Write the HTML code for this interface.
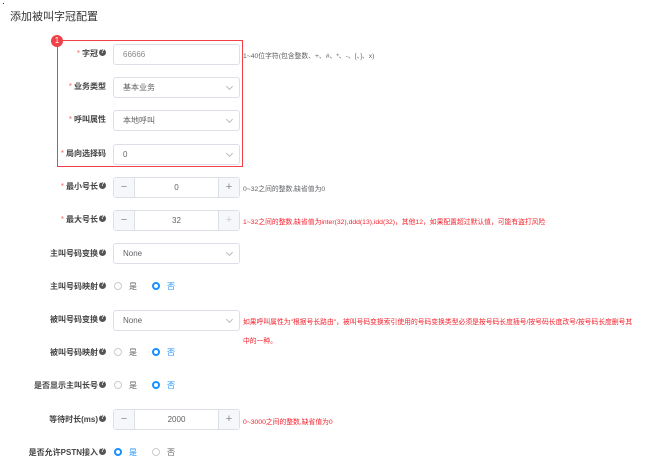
<!DOCTYPE html><html><head><meta charset="utf-8"><style>
body{margin:0;width:651px;height:470px;background:#fff;font-family:"Liberation Sans","Noto Sans CJK SC",sans-serif;position:relative;overflow:hidden;color:#333}
.a{position:absolute}
.t{left:10px;top:8px;font-size:11px;color:#333}
.lab{position:absolute;right:545px;font-size:8px;font-weight:bold;color:#444;white-space:nowrap;line-height:10px}
.lab b{color:#f56c6c;font-weight:normal;margin-right:2px}
.q{display:inline-block;width:7px;height:7px;border-radius:50%;background:#555;color:#fff;font-size:6px;line-height:7px;text-align:center;margin-left:1px;vertical-align:middle;position:relative;top:-1px}
.in{position:absolute;left:113px;width:125px;height:19px;border:1px solid #dcdfe6;border-radius:3px;font-size:8px;line-height:19px;color:#606266;box-sizing:content-box}
.in span{margin-left:9px}
.arr{position:absolute;right:7px;top:6px;width:4px;height:4px;border-right:1px solid #bbb;border-bottom:1px solid #bbb;transform:rotate(45deg)}
.num .m,.num .p{position:absolute;top:0;width:20px;height:19px;background:#f5f7fa;color:#888;text-align:center;font-size:11px}
.num .m{left:0;border-right:1px solid #dcdfe6}.num .p{right:0;border-left:1px solid #dcdfe6}
.num .v{position:absolute;left:21px;right:21px;text-align:center}
.h{position:absolute;left:243px;font-size:6.8px;white-space:nowrap;color:#606266}
.r{color:#f5222d}
.rad{position:absolute;font-size:8px;color:#606266}
.c{display:inline-block;width:8px;height:8px;border:1px solid #ccc;border-radius:50%;vertical-align:-1px;margin-right:7px;box-sizing:border-box}
.c.on{border:2.5px solid #1890ff;background:#fff}
.on+i{color:#1890ff;font-style:normal}
i{font-style:normal}
</style></head><body>
<div class="a" style="left:3px;top:3px;width:1px;height:1px;background:#333"></div>
<div class="a t">添加被叫字冠配置</div>
<div class="a" style="left:57px;top:40px;width:184px;height:125px;border:1.5px solid #f04048"></div>
<div class="a" style="left:51px;top:35px;width:12px;height:12px;border-radius:50%;background:#f04048;color:#fff;font-size:8px;text-align:center;line-height:12px">1</div>

<div class="lab" style="top:49px"><b>*</b>字冠<span class="q">?</span></div>
<div class="in" style="top:44px"><span style="color:#888">66666</span></div>
<div class="h" style="top:50px">1~40位字符(包含整数、+、#、*、-、[、]、x)</div>

<div class="lab" style="top:82px"><b>*</b>业务类型</div>
<div class="in" style="top:77px"><span>基本业务</span><div class="arr"></div></div>
<div class="lab" style="top:115px"><b>*</b>呼叫属性</div>
<div class="in" style="top:110px"><span>本地呼叫</span><div class="arr"></div></div>
<div class="lab" style="top:149px"><b>*</b>局向选择码</div>
<div class="in" style="top:144px"><span>0</span><div class="arr"></div></div>

<div class="lab" style="top:182px"><b>*</b>最小号长<span class="q">?</span></div>
<div class="in num" style="top:177px"><div class="m">−</div><div class="v">0</div><div class="p">+</div></div>
<div class="h" style="top:183px">0~32之间的整数,缺省值为0</div>

<div class="lab" style="top:215px"><b>*</b>最大号长<span class="q">?</span></div>
<div class="in num" style="top:210px"><div class="m">−</div><div class="v">32</div><div class="p" style="color:#ccc">+</div></div>
<div class="h r" style="top:216px">1~32之间的整数,缺省值为inter(32),ddd(13),idd(32)，其他12，如果配置超过默认值，可能有盗打风险</div>

<div class="lab" style="top:249px">主叫号码变换<span class="q">?</span></div>
<div class="in" style="top:243px"><span>None</span><div class="arr"></div></div>

<div class="lab" style="top:282px">主叫号码映射<span class="q">?</span></div>
<div class="rad" style="left:114px;top:281px"><span class="c"></span>是</div>
<div class="rad" style="left:152px;top:281px"><span class="c on"></span><i>否</i></div>

<div class="lab" style="top:315px">被叫号码变换<span class="q">?</span></div>
<div class="in" style="top:310px"><span>None</span><div class="arr"></div></div>
<div class="h r" style="top:316px">如果呼叫属性为"根据号长路由"，被叫号码变换索引使用的号码变换类型必须是按号码长度插号/按号码长度改号/按号码长度删号其</div>
<div class="h r" style="top:335px">中的一种。</div>

<div class="lab" style="top:348px">被叫号码映射<span class="q">?</span></div>
<div class="rad" style="left:114px;top:347px"><span class="c"></span>是</div>
<div class="rad" style="left:152px;top:347px"><span class="c on"></span><i>否</i></div>

<div class="lab" style="top:381px">是否显示主叫长号<span class="q">?</span></div>
<div class="rad" style="left:114px;top:380px"><span class="c"></span>是</div>
<div class="rad" style="left:152px;top:380px"><span class="c on"></span><i>否</i></div>

<div class="lab" style="top:415px">等待时长(ms)<span class="q">?</span></div>
<div class="in num" style="top:409px"><div class="m">−</div><div class="v">2000</div><div class="p">+</div></div>
<div class="h r" style="top:416px">0~3000之间的整数,缺省值为0</div>

<div class="lab" style="top:448px">是否允许PSTN接入<span class="q">?</span></div>
<div class="rad" style="left:114px;top:447px"><span class="c on"></span><i>是</i></div>
<div class="rad" style="left:152px;top:447px"><span class="c"></span>否</div>
</body></html>
